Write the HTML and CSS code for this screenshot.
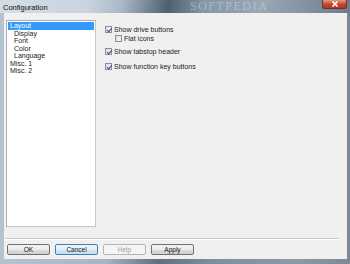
FILE: index.html
```html
<!DOCTYPE html>
<html>
<head>
<meta charset="utf-8">
<link rel="stylesheet" href="styles.css">
</head>
<body>
<div class="window">
  <div class="titlebar">
    <span class="title">Configuration</span>
    <span class="watermark">SOFTPEDIA</span>
    <span class="close"><svg width="8" height="6" viewBox="0 0 8 6"><path d="M1.5 0.5 L6.5 5.5 M6.5 0.5 L1.5 5.5" stroke="#fff" stroke-width="1.6"/></svg></span>
  </div>
  <div class="client">
    <div class="main">
      <ul class="listbox">
        <li class="item sel">Layout</li>
        <li class="item sub">Display</li>
        <li class="item sub">Font</li>
        <li class="item sub">Color</li>
        <li class="item sub">Language</li>
        <li class="item">Misc. 1</li>
        <li class="item">Misc. 2</li>
      </ul>
      <div class="options">
        <div class="check"><span class="box on"></span>Show drive buttons</div>
        <div class="check indent"><span class="box"></span>Flat icons</div>
        <div class="check gap1"><span class="box on"></span>Show tabstop header</div>
        <div class="check gap2"><span class="box on"></span>Show function key buttons</div>
      </div>
    </div>
    <div class="sep"></div>
    <div class="buttons">
      <button class="btn">OK</button>
      <button class="btn focus">Cancel</button>
      <button class="btn disabled">Help</button>
      <button class="btn">Apply</button>
    </div>
  </div>
</div>
</body>
</html>
```
FILE: styles.css
```css
html, body {
  margin: 0;
  padding: 0;
}
body {
  width: 350px;
  height: 264px;
  overflow: hidden;
  font-family: "Liberation Sans", "DejaVu Sans", sans-serif;
  background: #6f7f8e;
}
.window {
  width: 350px;
  height: 264px;
  display: flex;
  flex-direction: column;
  background: linear-gradient(90deg, #b4c3d2 0%, #a7b6c6 30%, #5f6f7f 45%, #7d8e9e 60%, #8c9aa8 85%, #7b8896 100%);
}
.titlebar {
  height: 13px;
  position: relative;
  overflow: hidden;
  display: flex;
  align-items: center;
  background: linear-gradient(100deg, #d4dde6 0%, #c9d4df 25%, #aab8c6 35%, #4d5f70 48%, #8596a6 58%, #9aa8b6 75%, #6c7b8a 100%);
}
.title {
  font-size: 7.5px;
  color: #111;
  margin-left: 3px;
  margin-top: 1px;
}
.watermark {
  position: absolute;
  left: 190px;
  top: 0;
  font-family: "Liberation Serif", serif;
  font-size: 12px;
  line-height: 13px;
  letter-spacing: 1.5px;
  color: rgba(220, 228, 236, 0.45);
}
.close {
  position: absolute;
  right: 3px;
  top: 0;
  width: 25px;
  height: 9px;
  border-radius: 0 0 3px 3px;
  background: linear-gradient(#e49a84, #c6432a 55%, #b13a22);
  border: 1px solid #6d3326;
  border-top: none;
  box-sizing: border-box;
  display: flex;
  align-items: center;
  justify-content: center;
}
.client {
  flex: 1;
  margin: 0 3px 5px 4px;
  background: #f0f0f0;
  display: flex;
  flex-direction: column;
}
.main {
  display: flex;
  padding-top: 7px;
  height: 214px;
  box-sizing: border-box;
}
.listbox {
  list-style: none;
  margin: 0 0 0 2px;
  padding: 1px;
  width: 90px;
  height: 207px;
  box-sizing: border-box;
  background: #fff;
  border: 1px solid #abadb3;
  border-right-color: #c6c6c6;
  border-bottom-color: #c6c6c6;
}
.item {
  font-size: 7px;
  line-height: 7.5px;
  color: #222;
  padding-left: 2px;
}
.item.sub {
  padding-left: 6px;
}
.item.sel {
  background: #3399ff;
  color: #fff;
}
.options {
  display: flex;
  flex-direction: column;
  padding-left: 9px;
  padding-top: 5px;
}
.check {
  display: flex;
  align-items: center;
  font-size: 7px;
  color: #222;
  height: 9px;
}
.check.indent {
  margin-left: 10px;
}
.check.gap1 {
  margin-top: 4px;
}
.check.gap2 {
  margin-top: 6px;
}
.box {
  width: 7px;
  height: 7px;
  box-sizing: border-box;
  border: 1px solid #8e8f8f;
  background: linear-gradient(135deg, #dcdcdc, #fbfbfb);
  margin-right: 2px;
  position: relative;
}
.box.on::after {
  content: "";
  position: absolute;
  left: 1.5px;
  top: 0px;
  width: 1.5px;
  height: 3.5px;
  border: solid #2a4a8a;
  border-width: 0 1.2px 1.2px 0;
  transform: rotate(40deg);
}
.sep {
  height: 1px;
  background: #c8c8c8;
  margin: 11px 9px 0 2px;
  border-bottom: 1px solid #fff;
}
.buttons {
  display: flex;
  gap: 5px;
  padding: 4px 0 0 3px;
}
.btn {
  width: 43px;
  height: 11px;
  padding: 0;
  margin: 0;
  font-family: "Liberation Sans", sans-serif;
  font-size: 6.5px;
  color: #111;
  border: 1px solid #707070;
  border-radius: 2px;
  background: linear-gradient(#f2f2f2 0%, #ebebeb 50%, #dddddd 51%, #cfcfcf 100%);
  box-sizing: border-box;
}
.btn.focus {
  border-color: #3c7fb1;
  background: linear-gradient(#eef6fb 0%, #e3eef8 50%, #d3e5f3 51%, #c6dcef 100%);
}
.btn.disabled {
  color: #a0a0a0;
  border-color: #b5b5b5;
  background: #f4f4f4;
}
```
